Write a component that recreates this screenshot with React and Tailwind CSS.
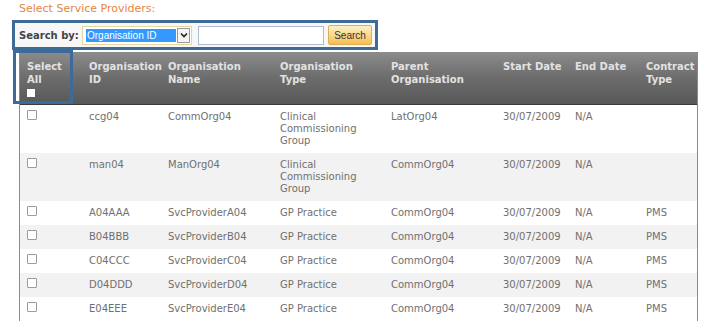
import React from "react";

const cols = ["w-[62px]", "w-[79px]", "w-[112px]", "w-[111px]", "w-[112px]", "w-[72px]", "w-[71px]", "w-[59px]"];

const headers = [
  ["Organisation", "ID"],
  ["Organisation", "Name"],
  ["Organisation", "Type"],
  ["Parent", "Organisation"],
  ["Start Date"],
  ["End Date"],
  ["Contract", "Type"],
];

const rows = [
  { id: "ccg04", name: "CommOrg04", type: ["Clinical", "Commissioning", "Group"], parent: "LatOrg04", contract: "" },
  { id: "man04", name: "ManOrg04", type: ["Clinical", "Commissioning", "Group"], parent: "CommOrg04", contract: "" },
  { id: "A04AAA", name: "SvcProviderA04", type: ["GP Practice"], parent: "CommOrg04", contract: "PMS" },
  { id: "B04BBB", name: "SvcProviderB04", type: ["GP Practice"], parent: "CommOrg04", contract: "PMS" },
  { id: "C04CCC", name: "SvcProviderC04", type: ["GP Practice"], parent: "CommOrg04", contract: "PMS" },
  { id: "D04DDD", name: "SvcProviderD04", type: ["GP Practice"], parent: "CommOrg04", contract: "PMS" },
  { id: "E04EEE", name: "SvcProviderE04", type: ["GP Practice"], parent: "CommOrg04", contract: "PMS" },
];

function Lines({ lines }) {
  return lines.map((l, i) => <div key={i}>{l}</div>);
}

export default function App() {
  return (
    <div className="relative w-[713px] h-[323px] overflow-hidden bg-white font-['DejaVu_Sans',Verdana,sans-serif]">
      {/* Title */}
      <div className="h-[20px] pl-[19px] pt-[2px] text-[11px] leading-[13px] text-[#e6863f]">
        Select Service Providers:
      </div>

      {/* Search bar (highlighted) */}
      <div className="ml-[12px] w-[366px] h-[30px] border-[3px] border-[#3d6a97] bg-[#f7f7f7] flex items-center pl-[4px]">
        <span className="text-[10px] font-bold text-[#444] w-[63px] whitespace-nowrap">Search by:</span>
        <div className="flex items-center h-[19px] w-[110px] border border-[#e3d6a2] bg-white pl-[3px] pr-[1px] font-['Liberation_Sans',Arial,sans-serif]">
          <div className="flex-1 h-[13px] bg-[#3399ff] text-white text-[10px] leading-[13px] pl-[1px] whitespace-nowrap">
            Organisation ID
          </div>
          <div className="ml-[1px] w-[13px] h-[15px] border border-[#9a9a9a] bg-[#f4f4f4] flex items-center justify-center">
            <svg width="8" height="6" viewBox="0 0 8 6">
              <path d="M1 1.5 L4 4.5 L7 1.5" fill="none" stroke="#222" strokeWidth="1.6" />
            </svg>
          </div>
        </div>
        <div className="ml-[6px] w-[126px] h-[19px] border border-[#a9bcd3] bg-white" />
        <button className="ml-[4px] w-[44px] h-[20px] border border-[#dcae55] rounded-[2px] bg-gradient-to-b from-[#fdf0c4] to-[#f6bf4f] text-[10px] text-[#333] font-['Liberation_Sans',Arial,sans-serif]">
          Search
        </button>
      </div>

      {/* Table */}
      <div className="ml-[19px] mt-[2px] w-[679px] border-x border-[#8a8a8a] text-[10px]">
        <div className="flex h-[53px] bg-gradient-to-b from-[#8c8c8c] via-[#6c6c6c] to-[#585858] border-b border-[#3a3a3a] text-[#e2e2e2] font-bold leading-[13px]">
          <div className={`${cols[0]} pl-[7px] pt-[8px] shrink-0`}>
            <div>Select</div>
            <div>All</div>
            <div className="mt-[3px] w-[8px] h-[8px] bg-white" />
          </div>
          {headers.map((h, i) => (
            <div key={i} className={`${cols[i + 1]} pl-[7px] pt-[8px] shrink-0 whitespace-nowrap`}>
              <Lines lines={h} />
            </div>
          ))}
        </div>

        {rows.map((r, i) => (
          <div
            key={r.id}
            className={`flex text-[#707070] leading-[12px] py-[6px] ${i % 2 === 1 ? "bg-[#f2f2f2]" : "bg-white"}`}
          >
            <div className={`${cols[0]} pl-[7px] shrink-0`}>
              <div className="w-[10px] h-[10px] border border-[#9c9c9c] rounded-[1px] bg-white mt-[-1px]" />
            </div>
            <div className={`${cols[1]} pl-[7px] shrink-0`}>{r.id}</div>
            <div className={`${cols[2]} pl-[7px] shrink-0`}>{r.name}</div>
            <div className={`${cols[3]} pl-[7px] shrink-0`}>
              <Lines lines={r.type} />
            </div>
            <div className={`${cols[4]} pl-[7px] shrink-0`}>{r.parent}</div>
            <div className={`${cols[5]} pl-[7px] shrink-0`}>30/07/2009</div>
            <div className={`${cols[6]} pl-[7px] shrink-0`}>N/A</div>
            <div className={`${cols[7]} pl-[7px] shrink-0`}>{r.contract}</div>
          </div>
        ))}
      </div>

      {/* Select All highlight overlay */}
      <div className="absolute left-[13px] top-[50px] w-[60px] h-[54px] border-[3px] border-[#3d6a97]" />
    </div>
  );
}
